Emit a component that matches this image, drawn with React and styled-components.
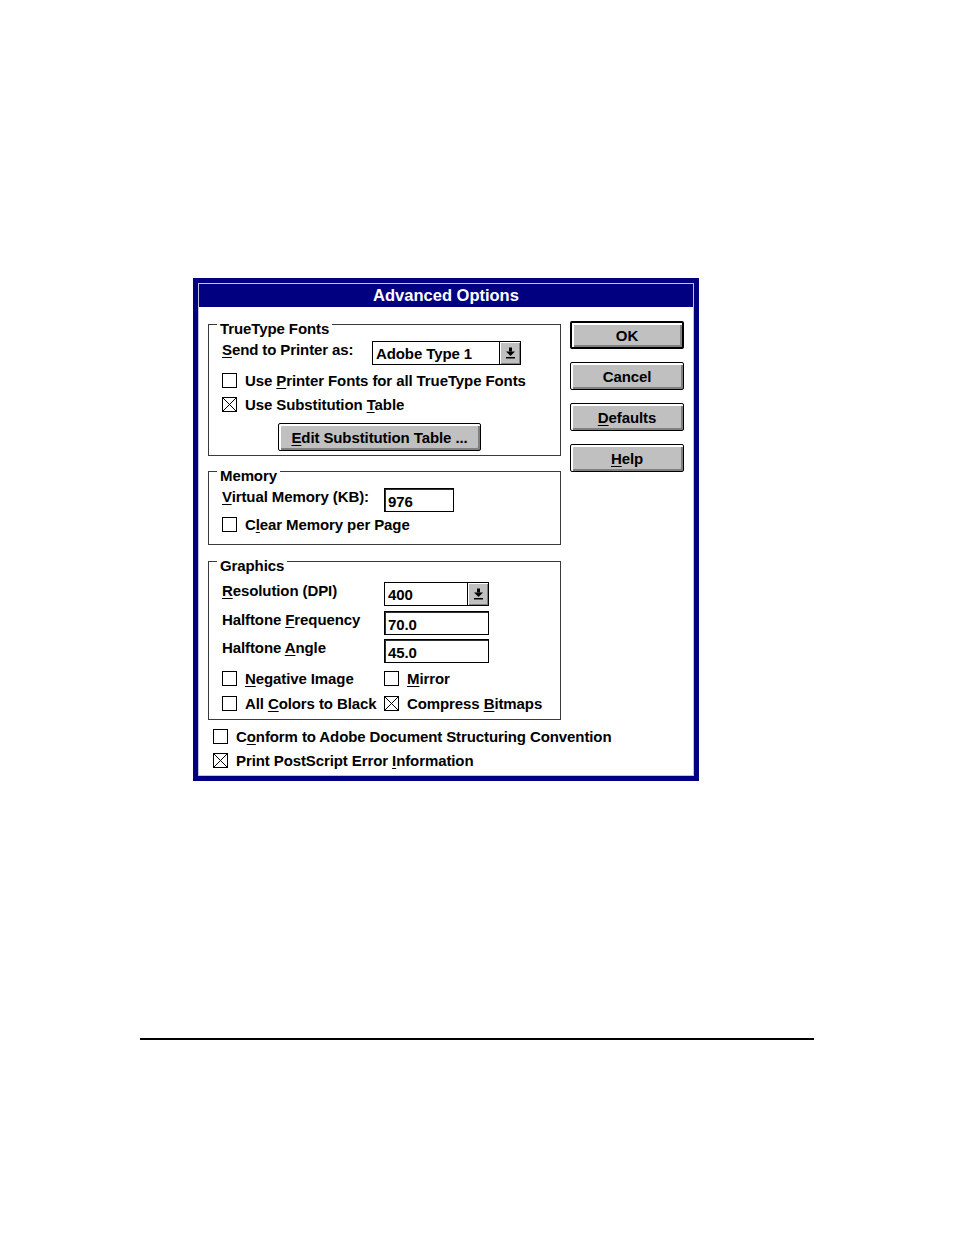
import React from 'react';
import styled, { createGlobalStyle } from 'styled-components';

const GlobalStyle = createGlobalStyle`
  html, body {
    margin: 0;
    padding: 0;
    background: #fff;
  }
  body {
    font-family: "Liberation Sans", Arial, sans-serif;
    font-size: 15px;
    font-weight: bold;
    letter-spacing: -0.1px;
    color: #000;
  }
  u {
    text-underline-offset: 2px;
    text-decoration-thickness: 1px;
  }
`;

const Page = styled.div`
  width: 954px;
  height: 1235px;
  padding-top: 278px;
  box-sizing: border-box;
`;

const Dialog = styled.div`
  margin-left: 193px;
  width: 506px;
  box-sizing: border-box;
  background: #000080;
  padding: 5px;
`;

const Inner = styled.div`
  border: 1px solid #c4c4d8;
  background: #fff;
`;

const TitleBar = styled.div`
  height: 23px;
  line-height: 23px;
  background: #000080;
  color: #fff;
  text-align: center;
  font-size: 16.5px;
  font-weight: bold;
  letter-spacing: 0;
`;

const Body = styled.div`
  padding: 17px 9px 3px 9px;
`;

const TopArea = styled.div`
  display: flex;
  gap: 9px;
  align-items: flex-start;
`;

const GroupColumn = styled.div`
  display: flex;
  flex-direction: column;
  width: 353px;
`;

const GroupBox = styled.div`
  position: relative;
  box-sizing: border-box;
  width: 353px;
  border: 1px solid #3a3a3a;
  margin-top: ${p => p.$gap || 0}px;
  padding: ${p => p.$top}px 13px ${p => p.$bottom}px 13px;
`;

const Legend = styled.span`
  position: absolute;
  top: -4px;
  left: 8px;
  padding: 0 3px;
  background: #fff;
  line-height: 16px;
`;

const FieldRow = styled.div`
  display: grid;
  grid-template-columns: ${p => p.$label}px auto;
  height: 24px;
  margin-top: ${p => p.$gap || 0}px;
`;

const FieldLabel = styled.span`
  line-height: 17px;
  white-space: nowrap;
`;

const ComboBox = styled.div`
  display: flex;
  width: ${p => p.$width}px;
  height: 24px;
  box-sizing: border-box;
  border: 1px solid #000;
  background: #fff;
`;

const ComboText = styled.span`
  flex: 1;
  padding-left: 3px;
  line-height: 23px;
`;

const ComboButton = styled.span`
  width: 20px;
  display: flex;
  align-items: center;
  justify-content: center;
  background: #c0c0c0;
  border-left: 1px solid #000;
  box-shadow: inset 1px 1px 0 #fff, inset -1px -1px 0 #808080;
`;

const TextInput = styled.div`
  width: ${p => p.$width}px;
  height: 24px;
  box-sizing: border-box;
  border: 1px solid #000;
  box-shadow: inset 1px 1px 0 #303030;
  padding-left: 3px;
  line-height: 25px;
  background: #fff;
`;

const CheckRow = styled.div`
  display: flex;
  align-items: center;
  gap: 8px;
  height: 24px;
  margin-top: ${p => p.$gap || 0}px;
  padding-left: ${p => p.$indent || 0}px;
  white-space: nowrap;
`;

const CheckGrid = styled.div`
  display: grid;
  grid-template-columns: 162px auto;
  margin-top: ${p => p.$gap || 0}px;
`;

const Box = styled.span`
  width: 15px;
  height: 15px;
  box-sizing: border-box;
  border: 1px solid #000;
  background: #fff;
  display: inline-flex;
  flex-shrink: 0;
`;

const ButtonColumn = styled.div`
  display: flex;
  flex-direction: column;
  gap: 13px;
  margin-top: -3px;
`;

const PushButton = styled.div`
  width: ${p => p.$width || 114}px;
  height: 28px;
  box-sizing: border-box;
  border: ${p => (p.$default ? 2 : 1)}px solid #000;
  border-radius: 2px;
  background: #c0c0c0;
  box-shadow: inset 1px 1px 0 #fff, inset 2px 2px 0 #fff, inset -1px -1px 0 #808080, inset -2px -2px 0 #808080;
  display: flex;
  align-items: center;
  justify-content: center;
  margin-top: ${p => p.$gap || 0}px;
  margin-left: ${p => p.$indent || 0}px;
  white-space: nowrap;
`;

const Rule = styled.div`
  margin: 257px 0 0 140px;
  width: 674px;
  height: 2px;
  background: #000;
`;

function Check({ checked }) {
  return (
    <Box>
      {checked && (
        <svg width="13" height="13" viewBox="0 0 13 13">
          <path d="M0 0 L13 13 M13 0 L0 13" stroke="#000" strokeWidth="1" />
        </svg>
      )}
    </Box>
  );
}

function CheckItem({ checked, children, gap, indent }) {
  return (
    <CheckRow $gap={gap} $indent={indent}>
      <Check checked={checked} />
      <span>{children}</span>
    </CheckRow>
  );
}

function DownArrow() {
  return (
    <svg width="9" height="12" viewBox="0 0 9 12">
      <rect x="3" y="0.5" width="3" height="4" fill="#000" />
      <polygon points="0,4.5 9,4.5 4.5,9" fill="#000" />
      <rect x="0" y="10" width="9" height="1.5" fill="#000" />
    </svg>
  );
}

function Combo({ width, value }) {
  return (
    <ComboBox $width={width}>
      <ComboText>{value}</ComboText>
      <ComboButton>
        <DownArrow />
      </ComboButton>
    </ComboBox>
  );
}

export default function App() {
  return (
    <Page>
      <GlobalStyle />
      <Dialog>
        <Inner>
          <TitleBar>Advanced Options</TitleBar>
          <Body>
            <TopArea>
              <GroupColumn>
                <GroupBox $top={16} $bottom={4}>
                  <Legend>TrueType Fonts</Legend>
                  <FieldRow $label={150}>
                    <FieldLabel><u>S</u>end to Printer as:</FieldLabel>
                    <Combo width={149} value="Adobe Type 1" />
                  </FieldRow>
                  <CheckItem gap={3}>Use <u>P</u>rinter Fonts for all TrueType Fonts</CheckItem>
                  <CheckItem checked>Use Substitution <u>T</u>able</CheckItem>
                  <PushButton $width={203} $gap={7} $indent={56}>
                    <span><u>E</u>dit Substitution Table ...</span>
                  </PushButton>
                </GroupBox>

                <GroupBox $gap={15} $top={16} $bottom={8}>
                  <Legend>Memory</Legend>
                  <FieldRow $label={162}>
                    <FieldLabel><u>V</u>irtual Memory (KB):</FieldLabel>
                    <TextInput $width={70}>976</TextInput>
                  </FieldRow>
                  <CheckItem>C<u>l</u>ear Memory per Page</CheckItem>
                </GroupBox>

                <GroupBox $gap={16} $top={20} $bottom={4}>
                  <Legend>Graphics</Legend>
                  <FieldRow $label={162}>
                    <FieldLabel><u>R</u>esolution (DPI)</FieldLabel>
                    <Combo width={105} value="400" />
                  </FieldRow>
                  <FieldRow $label={162} $gap={5}>
                    <FieldLabel>Halftone <u>F</u>requency</FieldLabel>
                    <TextInput $width={105}>70.0</TextInput>
                  </FieldRow>
                  <FieldRow $label={162} $gap={4}>
                    <FieldLabel>Halftone <u>A</u>ngle</FieldLabel>
                    <TextInput $width={105}>45.0</TextInput>
                  </FieldRow>
                  <CheckGrid $gap={3}>
                    <CheckItem><u>N</u>egative Image</CheckItem>
                    <CheckItem><u>M</u>irror</CheckItem>
                  </CheckGrid>
                  <CheckGrid $gap={1}>
                    <CheckItem>All <u>C</u>olors to Black</CheckItem>
                    <CheckItem checked>Compress <u>B</u>itmaps</CheckItem>
                  </CheckGrid>
                </GroupBox>
              </GroupColumn>

              <ButtonColumn>
                <PushButton $default>OK</PushButton>
                <PushButton>Cancel</PushButton>
                <PushButton><span><u>D</u>efaults</span></PushButton>
                <PushButton><span><u>H</u>elp</span></PushButton>
              </ButtonColumn>
            </TopArea>

            <CheckItem gap={4} indent={5}>C<u>o</u>nform to Adobe Document Structuring Convention</CheckItem>
            <CheckItem indent={5} checked>Print PostScript Error <u>I</u>nformation</CheckItem>
          </Body>
        </Inner>
      </Dialog>
      <Rule />
    </Page>
  );
}
